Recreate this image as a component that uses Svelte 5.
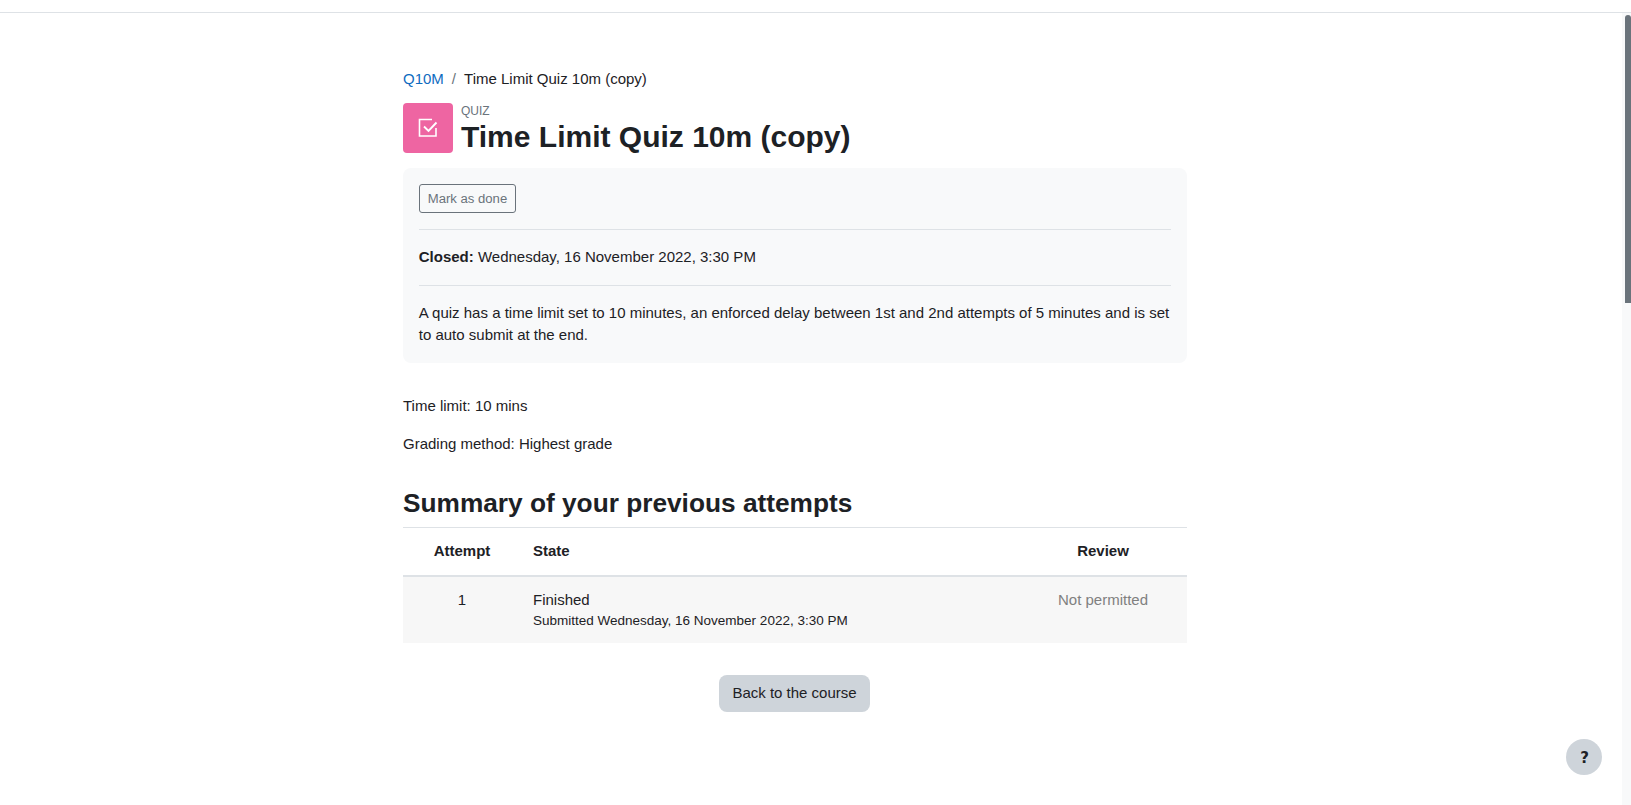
<script>
	let attempts = [
		{ id: 1, state: 'Finished', submitted: 'Submitted Wednesday, 16 November 2022, 3:30 PM', review: 'Not permitted' }
	];
</script>

<svelte:head>
	<title>Time Limit Quiz 10m (copy)</title>
</svelte:head>

<nav class="navbar"></nav>

<div class="page">
	<main class="content">
		<ol class="breadcrumb">
			<li><a href="#course">Q10M</a></li>
			<li class="sep">/</li>
			<li>Time Limit Quiz 10m (copy)</li>
		</ol>

		<header class="page-header">
			<div class="activity-icon">
				<svg width="24" height="24" viewBox="0 0 24 24" fill="none" stroke="#fff" stroke-width="1.6">
					<path d="M20 12V20H3.5V3.5H16" />
					<path d="M8 10.5l4.5 4.5L20.5 6.5" stroke-width="1.9" />
				</svg>
			</div>
			<div class="titles">
				<div class="modtype">QUIZ</div>
				<h1>Time Limit Quiz 10m (copy)</h1>
			</div>
		</header>

		<section class="activity-info">
			<div class="block first">
				<button class="mark-done">Mark as done</button>
			</div>
			<div class="block dates">
				<strong>Closed:</strong> Wednesday, 16 November 2022, 3:30 PM
			</div>
			<div class="block description">
				A quiz has a time limit set to 10 minutes, an enforced delay between 1st and 2nd attempts of 5 minutes and is set to auto submit at the end.
			</div>
		</section>

		<div class="quiz-info">
			<p>Time limit: 10 mins</p>
			<p>Grading method: Highest grade</p>
		</div>

		<h2>Summary of your previous attempts</h2>

		<table>
			<colgroup>
				<col class="col-attempt" />
				<col />
				<col class="col-review" />
			</colgroup>
			<thead>
				<tr>
					<th class="center">Attempt</th>
					<th>State</th>
					<th class="center">Review</th>
				</tr>
			</thead>
			<tbody>
				{#each attempts as attempt}
					<tr>
						<td class="center">{attempt.id}</td>
						<td>
							{attempt.state}
							<div class="submitted">{attempt.submitted}</div>
						</td>
						<td class="center muted">{attempt.review}</td>
					</tr>
				{/each}
			</tbody>
		</table>

		<div class="actions">
			<button class="back">Back to the course</button>
		</div>
	</main>
</div>

<button class="help">?</button>

<div class="scrollbar"><div class="thumb"></div></div>

<style>
	:global(body) {
		margin: 0;
		background: #fff;
		color: #1d2125;
		font-family: "Liberation Sans", Arial, sans-serif;
		font-size: 15px;
		line-height: 1.5;
		overflow: hidden;
		height: 805px;
	}

	.navbar {
		height: 12px;
		background: #fff;
		border-bottom: 1px solid #dee2e6;
	}

	.page {
		padding: 55px 0 0 403px;
	}

	.content {
		width: 784px;
	}

	.breadcrumb {
		display: flex;
		gap: 8px;
		list-style: none;
		margin: 0 0 12px;
		padding: 0;
	}

	.breadcrumb a {
		color: #0f6cbf;
		text-decoration: none;
	}

	.sep {
		color: #6a737b;
	}

	.page-header {
		display: flex;
		gap: 8px;
		margin-bottom: 13px;
	}

	.activity-icon {
		width: 50px;
		height: 50px;
		border-radius: 4px;
		background: #ee65a2;
		display: flex;
		align-items: center;
		justify-content: center;
	}

	.modtype {
		margin-top: 1px;
		font-size: 12px;
		line-height: 15px;
		color: #6a737b;
	}

	h1 {
		margin: 0;
		font-size: 30px;
		line-height: 36px;
		font-weight: 700;
	}

	.activity-info {
		background: #f8f9fa;
		border-radius: 8px;
		padding: 16px 15.75px;
		height: 195px;
		box-sizing: border-box;
	}

	.block {
		border-top: 1px solid #dee2e6;
	}

	.block.first {
		border-top: 0;
		padding: 0 0 16px;
	}

	.block.dates {
		padding: 16.5px 0;
	}

	.block.description {
		padding: 15.7px 0 0;
	}

	.mark-done {
		display: block;
		height: 29px;
		padding: 1px 8px 0;
		font: inherit;
		font-size: 13.125px;
		color: #6a737b;
		background: transparent;
		border: 1px solid #6a737b;
		border-radius: 3px;
	}

	.quiz-info {
		margin-top: 32.4px;
	}

	.quiz-info p {
		margin: 0 0 15.6px;
	}

	h2 {
		margin: 33px 0 0;
		font-size: 26.25px;
		line-height: 31px;
		font-weight: 700;
	}

	table {
		width: 100%;
		margin-top: 8px;
		border-collapse: collapse;
		table-layout: fixed;
	}

	.col-attempt {
		width: 118px;
	}

	.col-review {
		width: 168px;
	}

	th,
	td {
		padding: 12px;
		text-align: left;
		vertical-align: top;
	}

	th {
		font-weight: 700;
		border-top: 1px solid #dee2e6;
		border-bottom: 2px solid #dee2e6;
	}

	td {
		padding-bottom: 13px;
		background: #f7f7f7;
	}

	.center {
		text-align: center;
	}

	.muted {
		color: #808080;
	}

	.submitted {
		font-size: 13.5px;
		line-height: 19px;
	}

	.actions {
		display: flex;
		justify-content: center;
		margin-top: 32px;
	}

	.back {
		height: 37px;
		margin-right: 1px;
		padding: 0 13px 1px;
		font: inherit;
		color: #1d2125;
		background: #ced4da;
		border: 0;
		border-radius: 8px;
	}

	.help {
		position: fixed;
		left: 1566px;
		top: 739px;
		width: 36px;
		height: 36px;
		padding: 1px 0 0 1px;
		border: 0;
		border-radius: 50%;
		background: #ced4da;
		color: #1d2125;
		font: 700 15px "DejaVu Sans", sans-serif;
	}

	.scrollbar {
		position: fixed;
		top: 13px;
		right: 0;
		bottom: 0;
		width: 9px;
		background: #f8f9fa;
	}

	.thumb {
		margin: 2px 0 0 3px;
		width: 6px;
		height: 288px;
		background: #6a737b;
		border-radius: 3px 3px 0 0;
	}
</style>
